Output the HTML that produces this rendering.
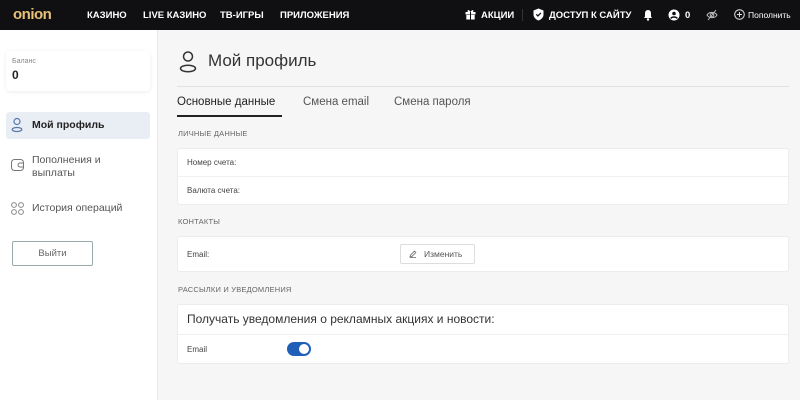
<!DOCTYPE html>
<html><head><meta charset="utf-8"><style>
*{margin:0;padding:0;box-sizing:border-box}
body{width:800px;height:400px;overflow:hidden;font-family:"Liberation Sans",sans-serif;background:#f6f6f6;position:relative;color:#222}
.hdr{position:absolute;left:0;top:0;width:800px;height:30px;background:#101013;color:#fff;font-weight:bold;font-size:9.5px}
.hdr span{position:absolute;top:10px}
.side{position:absolute;left:0;top:30px;width:158px;height:370px;background:#fff;border-right:1px solid #e8e8e8}
.abs{position:absolute}
.lbl{font-size:7.5px;color:#666;letter-spacing:.2px}
.card{position:absolute;left:177px;width:612px;background:#fff;border:1px solid #ececec;border-radius:3px}
.sm{font-size:8px;color:#444}
</style></head><body>
<div class="hdr">
<span style="left:13px;top:6px;font-size:15px;color:#e8c27a;letter-spacing:-0.5px">onion</span>
<span style="left:87px">КАЗИНО</span>
<span style="left:143px">LIVE КАЗИНО</span>
<span style="left:220px">ТВ-ИГРЫ</span>
<span style="left:280px">ПРИЛОЖЕНИЯ</span>
<svg class="abs" style="left:465px;top:9px" width="11" height="11" viewBox="0 0 11 11" fill="#fff"><rect x="0.5" y="3" width="10" height="2.5"/><rect x="1.3" y="6" width="8.4" height="4.5"/><path d="M5.5 3C4 0 1.5 1 3 3ZM5.5 3C7 0 9.5 1 8 3Z"/><rect x="5" y="3" width="1" height="7.5" fill="#101013"/></svg>
<span style="left:481px">АКЦИИ</span>
<div class="abs" style="left:522px;top:9px;width:1px;height:12px;background:#333"></div>
<svg class="abs" style="left:533px;top:8px" width="11" height="13" viewBox="0 0 11 13"><path d="M5.5 0.5L10.5 2.5V6.5C10.5 9.5 8 11.5 5.5 12.5C3 11.5 0.5 9.5 0.5 6.5V2.5Z" fill="#fff"/><path d="M3.3 6.3l1.6 1.6 3-3" stroke="#101013" stroke-width="1.3" fill="none"/></svg>
<span style="left:549px">ДОСТУП К САЙТУ</span>
<svg class="abs" style="left:643px;top:9px" width="10" height="12" viewBox="0 0 10 12"><path d="M5 1C3 1 2 2.5 2 4.5V7.5L1 9H9L8 7.5V4.5C8 2.5 7 1 5 1Z" fill="#fff"/><circle cx="5" cy="10.5" r="1.2" fill="#fff"/></svg>
<svg class="abs" style="left:668px;top:9px" width="12" height="12" viewBox="0 0 12 12"><circle cx="6" cy="6" r="5.5" fill="#fff"/><circle cx="6" cy="4.5" r="1.8" fill="#101013"/><path d="M2.8 9.5C4 7.5 8 7.5 9.2 9.5" stroke="#101013" stroke-width="1.6" fill="none"/></svg>
<span style="left:685px">0</span>
<svg class="abs" style="left:706px;top:9px" width="12" height="12" viewBox="0 0 12 12" fill="none" stroke="#bbb" stroke-width="1"><path d="M1 6C3 2.5 9 2.5 11 6C9 9.5 3 9.5 1 6Z"/><circle cx="6" cy="6" r="1.8"/><path d="M2 11L10 1"/></svg>
<svg class="abs" style="left:734px;top:9px" width="11" height="11" viewBox="0 0 11 11" fill="none" stroke="#ddd" stroke-width="1"><circle cx="5.5" cy="5.5" r="4.8"/><path d="M5.5 3v5M3 5.5h5"/></svg>
<span style="left:748px;font-weight:normal;font-size:8.5px">Пополнить</span>
</div>
<div class="side">
<div class="abs" style="left:6px;top:21px;width:144px;height:40px;background:#fff;border-radius:4px;box-shadow:0 1px 4px rgba(0,0,0,.08)">
<div class="abs" style="left:6px;top:7px;font-size:7px;color:#888">Баланс</div>
<div class="abs" style="left:6px;top:17px;font-size:12px;font-weight:bold">0</div></div>
<div class="abs" style="left:6px;top:82px;width:144px;height:27px;background:#e9eef5;border-radius:3px"></div>
<svg class="abs" style="left:11px;top:87px" width="12" height="16" viewBox="0 0 12 16" fill="none" stroke="#5577aa" stroke-width="1.2"><circle cx="6" cy="4.5" r="3"/><ellipse cx="6" cy="12.5" rx="4.8" ry="2"/></svg>
<div class="abs" style="left:32px;top:89px;font-size:10.5px;font-weight:bold">Мой профиль</div>
<svg class="abs" style="left:11px;top:129px" width="13" height="12" viewBox="0 0 13 12" fill="none" stroke="#777" stroke-width="1"><rect x="0.5" y="0.5" width="12" height="11" rx="3"/><path d="M12.5 4H9a2 2 0 0 0 0 4h3.5"/></svg>
<div class="abs" style="left:32px;top:124px;font-size:10.5px;color:#555;line-height:13px">Пополнения и<br>выплаты</div>
<svg class="abs" style="left:11px;top:172px" width="13" height="13" viewBox="0 0 13 13" fill="none" stroke="#888" stroke-width="1"><circle cx="3" cy="3" r="2.4"/><circle cx="10" cy="3" r="2.4"/><circle cx="3" cy="10" r="2.4"/><circle cx="10" cy="10" r="2.4"/></svg>
<div class="abs" style="left:32px;top:172px;font-size:10.5px;color:#555">История операций</div>
<div class="abs" style="left:12px;top:211px;width:81px;height:25px;border:1px solid #9aa;border-radius:2px;font-size:9.5px;color:#666;text-align:center;line-height:23px">Выйти</div>
</div>
<svg class="abs" style="left:179px;top:50px" width="18" height="24" viewBox="0 0 18 24" fill="none" stroke="#333" stroke-width="1.5"><circle cx="9" cy="6.5" r="4.5"/><ellipse cx="9" cy="18.5" rx="7.5" ry="3.2"/></svg>
<div class="abs" style="left:208px;top:51px;font-size:17px;color:#333">Мой профиль</div>
<div class="abs" style="left:177px;top:86px;width:612px;height:1px;background:#e2e2e2"></div>
<div class="abs" style="left:177px;top:96px;font-size:11.5px;color:#222">Основные данные</div>
<div class="abs" style="left:177px;top:115px;width:105px;height:2px;background:#222"></div>
<div class="abs" style="left:303px;top:96px;font-size:11.5px;color:#555">Смена email</div>
<div class="abs" style="left:394px;top:96px;font-size:11.5px;color:#555">Смена пароля</div>
<div class="abs lbl" style="left:178px;top:129px">ЛИЧНЫЕ ДАННЫЕ</div>
<div class="card" style="top:148px;height:57px">
<div class="abs sm" style="left:9px;top:9px">Номер счета:</div>
<div class="abs" style="left:0;top:27px;width:100%;height:1px;background:#f0f0f0"></div>
<div class="abs sm" style="left:9px;top:37px">Валюта счета:</div></div>
<div class="abs lbl" style="left:178px;top:217px">КОНТАКТЫ</div>
<div class="card" style="top:236px;height:36px">
<div class="abs sm" style="left:9px;top:13px">Email:</div>
<div class="abs" style="left:222px;top:7px;width:75px;height:20px;border:1px solid #ddd;border-radius:2px;font-size:8.5px;color:#555;line-height:18px;padding-left:23px">Изменить</div>
<svg class="abs" style="left:231px;top:13px" width="8" height="8" viewBox="0 0 8 8" fill="none" stroke="#666" stroke-width=".8"><path d="M1 7L1.3 5.3 5.5 1.1 6.9 2.5 2.7 6.7Z M1 7.5H7"/></svg>
</div>
<div class="abs lbl" style="left:178px;top:285px">РАССЫЛКИ И УВЕДОМЛЕНИЯ</div>
<div class="card" style="top:304px;height:60px">
<div class="abs" style="left:9px;top:7px;font-size:12px;color:#333">Получать уведомления о рекламных акциях и новости:</div>
<div class="abs" style="left:0;top:29px;width:100%;height:1px;background:#f0f0f0"></div>
<div class="abs sm" style="left:9px;top:40px">Email</div>
<div class="abs" style="left:109px;top:37px;width:24px;height:14px;border-radius:7px;background:#1f5fb8"><div class="abs" style="left:12px;top:2px;width:10px;height:10px;border-radius:5px;background:#fff"></div></div>
</div>
</body></html>
